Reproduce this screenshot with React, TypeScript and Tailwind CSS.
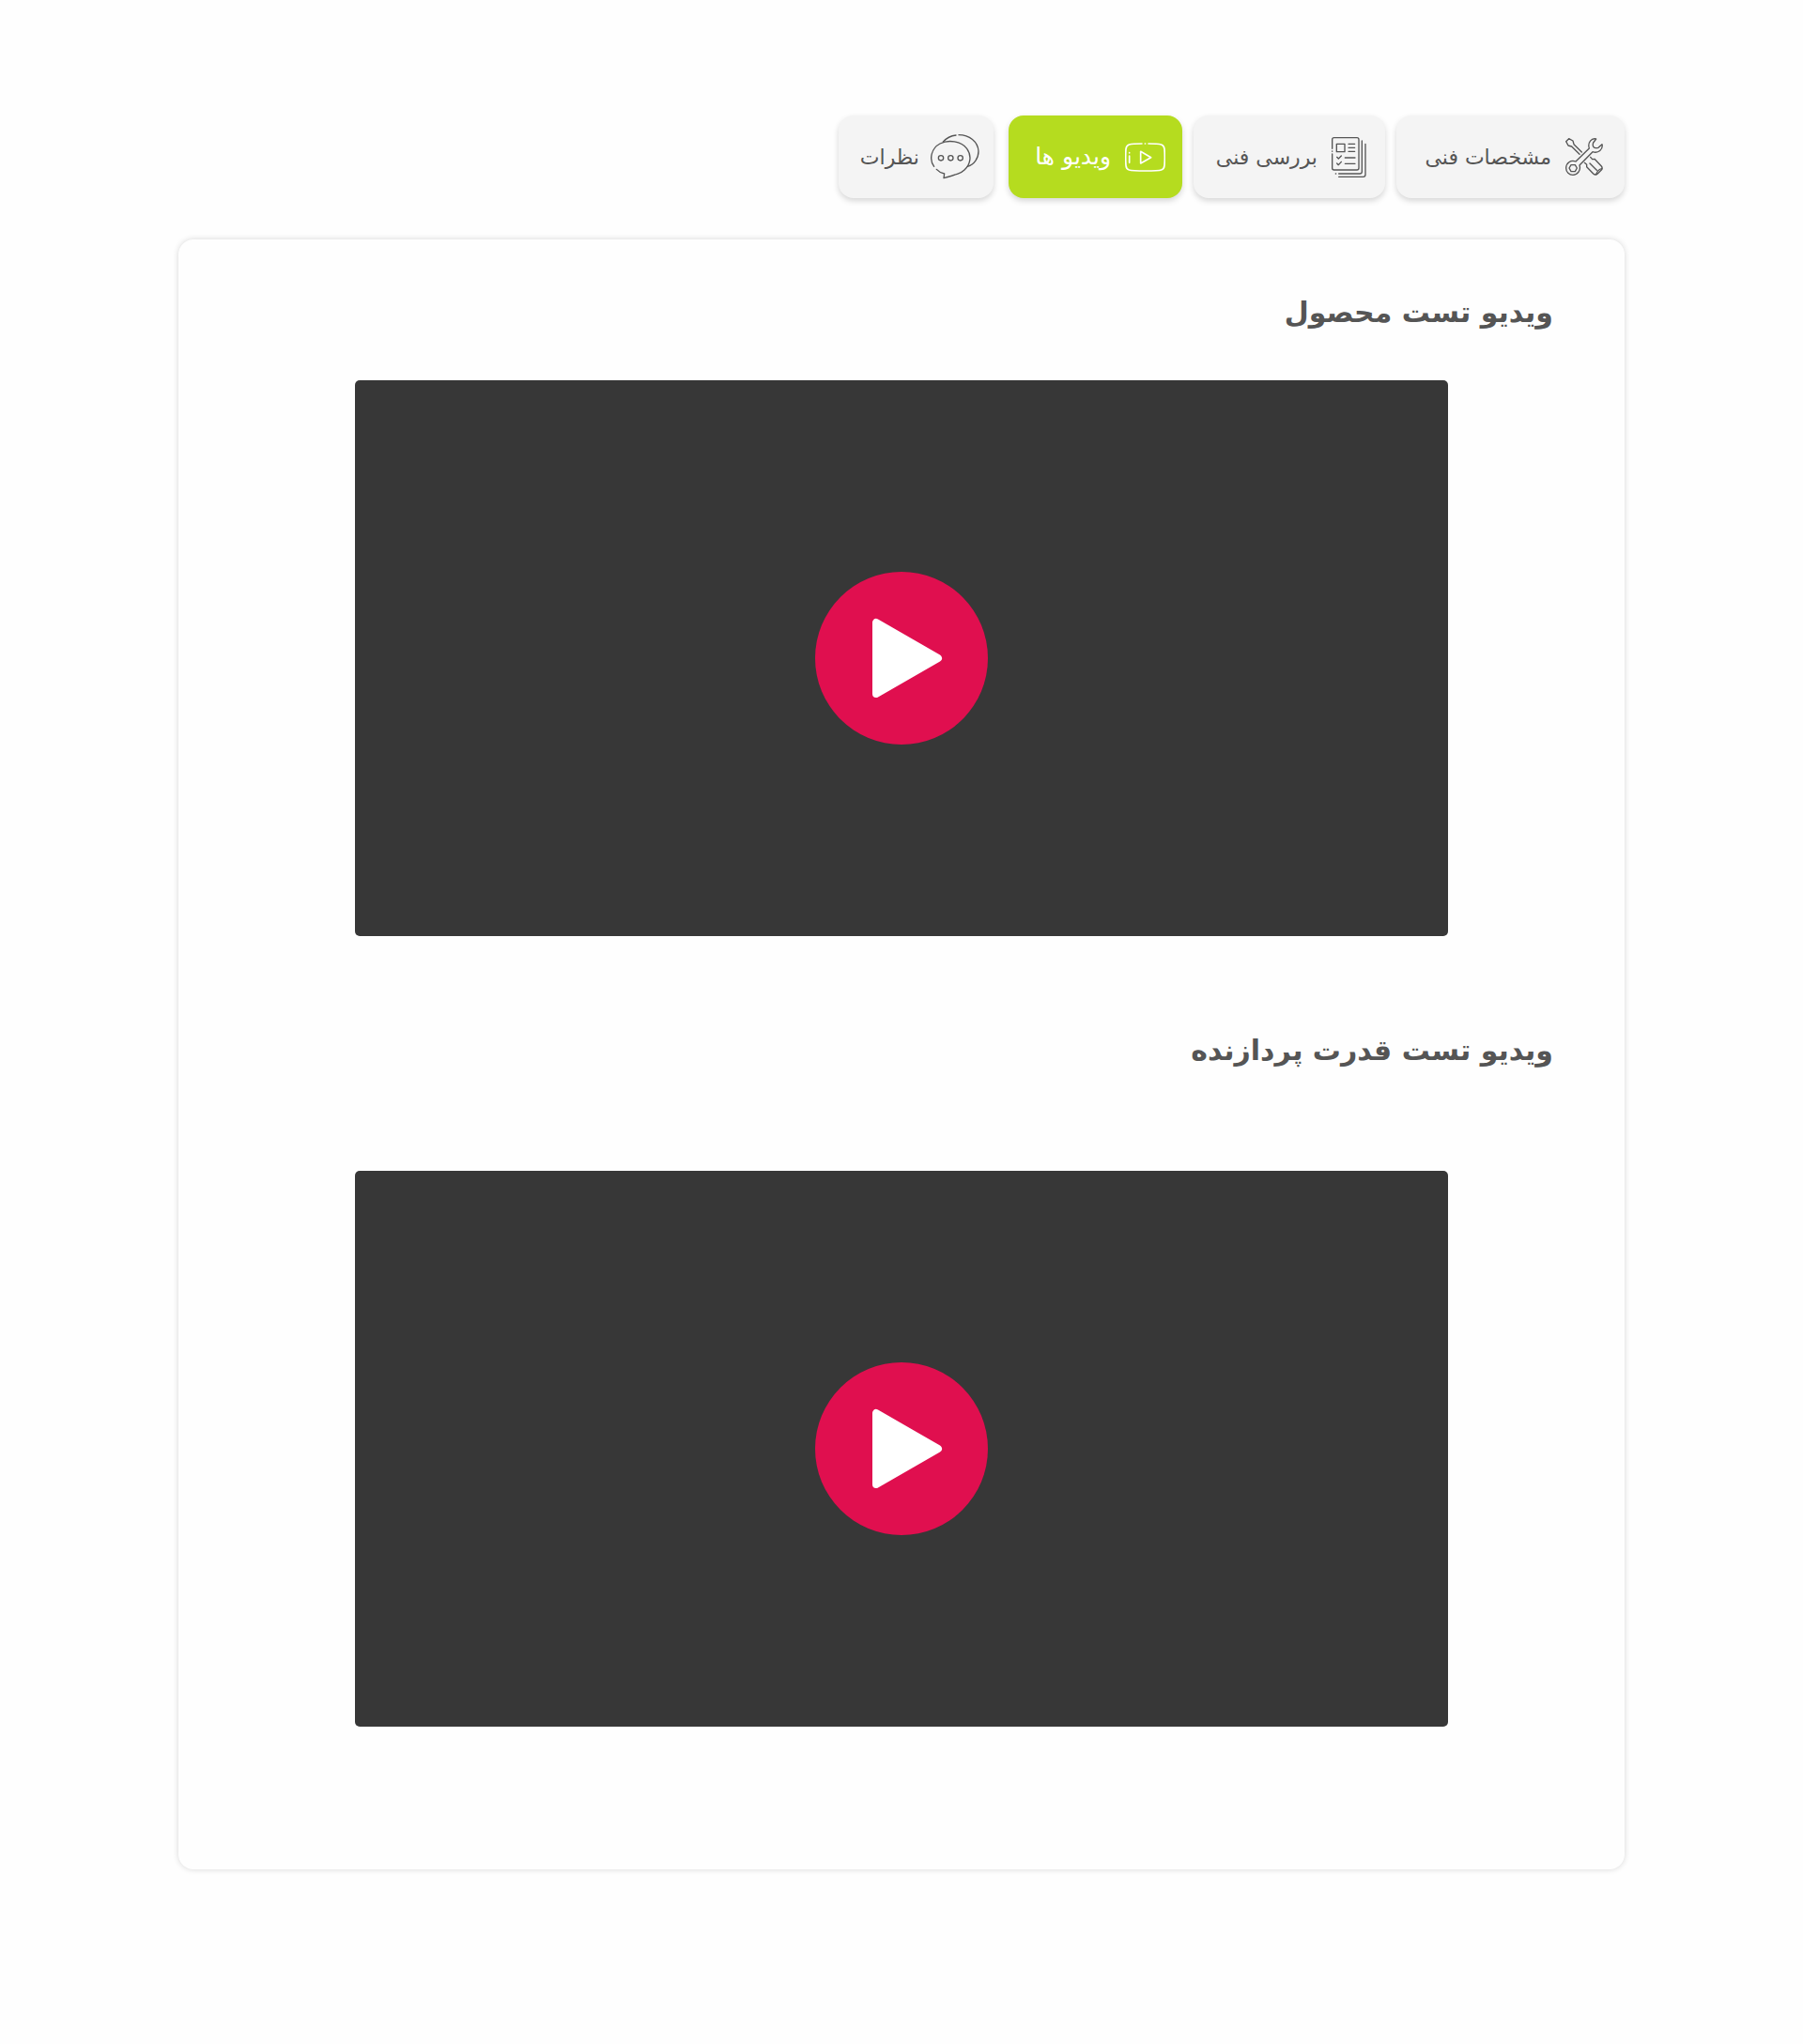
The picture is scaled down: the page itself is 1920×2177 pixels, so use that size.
import React, { useState } from "react";

const strokeProps = {
  fill: "none",
  stroke: "currentColor",
  strokeWidth: 4,
  strokeLinecap: "round" as const,
  strokeLinejoin: "round" as const,
  "aria-hidden": true,
};

function ToolsIcon() {
  return (
    <svg viewBox="0 0 120 120" className="h-10 w-10 shrink-0" {...strokeProps}>
      <path d="M52 45 L27 20 L24 9 L11 2 L2 11 L9 24 L20 27 L45 52" />
      <path d="M98 3 C84 -1 70 14 76 33 L33 75 C17 69 2 80 2 96 C2 109 12 118 24 118 C39 118 50 103 45 87 L87 44 C105 50 121 37 117 20 L105 31 Q94 34 90 29 Q86 24 89 15 Z" />
      <path d="M18 86 H31 L37 96 L31 107 H18 L12 96 Z" />
      <path d="M80 61 L86 68 L93 67 L115 90 Q120 97 115 102 L103 114 Q96 120 89 114 L68 92 L68 85 L61 79" />
      <path d="M78 81 L100 103" />
      <path d="M116 98 Q104 100 98 116" />
    </svg>
  );
}

function ReviewIcon() {
  return (
    <svg viewBox="0 0 111 129" className="h-[43px] w-[37px] shrink-0" {...strokeProps}>
      <path d="M2 37 V8 Q2 2 8 2 H81 Q87 2 87 8 V99 Q87 105 81 105 H8 Q2 105 2 99 V54" />
      <path d="M2 45 V46" />
      <path d="M97 12 V110 Q97 117 90 117 H23" />
      <path d="M13 117 H14" />
      <path d="M108 22 V120 Q108 127 101 127 H23" />
      <path d="M16 22 H42 V47 H16 Z" />
      <path d="M54 22 H74 M54 34 H74 M54 46 H74" />
      <path d="M17 64 L22 69 L31 60 M17 84 L22 89 L31 79" />
      <path d="M43 66 H75 M43 85 H75" />
    </svg>
  );
}

function VideoIcon() {
  return (
    <svg viewBox="0 0 129 93" className="h-[31px] w-[43px] shrink-0" {...strokeProps} strokeWidth={5}>
      <path d="M54 3 C34 3 20 4 13 6 Q4 9 3 20 Q1 46 3 73 Q4 84 13 87 Q23 90 65 90 Q107 90 116 87 Q125 84 126 73 Q128 46 126 20 Q125 9 116 6 C109 4 95 3 75 3" />
      <path d="M64 3 H65" />
      <path d="M50 28 V66 L83 47 Z" />
      <path d="M14 42 V64 M14 32 V33" />
    </svg>
  );
}

function CommentsIcon() {
  return (
    <svg viewBox="0 0 156 144" className="h-12 w-[52px] shrink-0" {...strokeProps}>
      <path d="M11 103 C-6 80 2 45 30 30 C57 16 98 22 116 46 C132 68 128 96 108 114 C98 124 84 128 42 140 L44 126 Q28 122 19 112" />
      <path d="M40 24 Q56 6 81 3" />
      <path d="M90 2 C124 2 151 24 153 54 C153 76 140 96 118 103" />
      <circle cx="33" cy="76" r="8" />
      <circle cx="64" cy="76" r="8" />
      <circle cx="95" cy="76" r="8" />
    </svg>
  );
}

const tabs = [
  { label: "مشخصات فنی", icon: ToolsIcon, box: "w-[243px] ps-[23px] gap-[15px] text-[22px]" },
  { label: "بررسی فنی", icon: ReviewIcon, box: "w-[204px] ps-5 gap-[15px] text-[22px]" },
  { label: "ویدیو ها", icon: VideoIcon, box: "w-[185px] ps-[18px] gap-[15px] text-[25px]" },
  { label: "نظرات", icon: CommentsIcon, box: "w-[165px] ps-[15px] gap-3 ms-1 text-[22px]" },
];

function VideoPlayer({ title }: { title: string }) {
  return (
    <div className="mx-auto flex aspect-[1164/592] w-full max-w-[1164px] items-center justify-center rounded-[5px] bg-[#373737]">
      <button type="button" aria-label={title} className="rounded-full">
        <svg viewBox="0 0 184 184" className="h-[184px] w-[184px]" aria-hidden="true">
          <circle cx="92" cy="92" r="92" fill="#e00f4f" />
          <path
            d="M65 54 V130 L131 92 Z"
            fill="#fff"
            stroke="#fff"
            strokeWidth="8"
            strokeLinejoin="round"
          />
        </svg>
      </button>
    </div>
  );
}

export default function App() {
  const [active, setActive] = useState(2);
  return (
    <div
      dir="rtl"
      lang="fa"
      className="min-h-screen bg-[#fefefe] px-[190px] pt-[123px] pb-[186px] font-['DejaVu_Sans',sans-serif] text-[#555555]"
    >
      <div role="tablist" className="flex flex-wrap gap-3">
        {tabs.map(({ label, icon: Icon, box }, i) => (
          <button
            key={label}
            type="button"
            role="tab"
            aria-selected={i === active}
            onClick={() => setActive(i)}
            className={`flex h-[88px] items-center rounded-2xl whitespace-nowrap shadow-[0_3px_6px_rgba(0,0,0,0.16)] ${box} ${
              i === active ? "bg-[#b5dc1f] text-white" : "bg-[#f4f4f4]"
            }`}
          >
            <Icon />
            <span>{label}</span>
          </button>
        ))}
      </div>

      <main className="mt-11 rounded-2xl bg-[#fefefe] pb-[152px] shadow-[0_0_6px_rgba(0,0,0,0.16)]">
        <section>
          <h2 className="px-[76px] pt-[58px] text-[30px] leading-10 font-bold">ویدیو تست محصول</h2>
          <div className="mt-[52px]">
            <VideoPlayer title="پخش ویدیو تست محصول" />
          </div>
        </section>
        <section>
          <h2 className="px-[76px] pt-[102px] text-[30px] leading-10 font-bold">
            ویدیو تست قدرت پردازنده
          </h2>
          <div className="mt-[108px]">
            <VideoPlayer title="پخش ویدیو تست قدرت پردازنده" />
          </div>
        </section>
      </main>
    </div>
  );
}
